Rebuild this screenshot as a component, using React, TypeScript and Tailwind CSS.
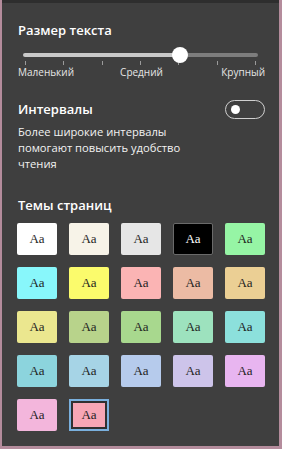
const swatches = [
  { bg: "bg-[#ffffff]" },
  { bg: "bg-[#f7f3e8]" },
  { bg: "bg-[#e6e6e6]" },
  { bg: "bg-[#000000]", dark: true },
  { bg: "bg-[#96f5a5]" },
  { bg: "bg-[#88f7fb]" },
  { bg: "bg-[#fbfb6c]" },
  { bg: "bg-[#fbb4b4]" },
  { bg: "bg-[#ecbba4]" },
  { bg: "bg-[#ebcf94]" },
  { bg: "bg-[#ebe78f]" },
  { bg: "bg-[#b8d38b]" },
  { bg: "bg-[#a8d88e]" },
  { bg: "bg-[#9de2be]" },
  { bg: "bg-[#8ce0dc]" },
  { bg: "bg-[#8cd4dd]" },
  { bg: "bg-[#a6d4e6]" },
  { bg: "bg-[#b6cbec]" },
  { bg: "bg-[#cdc4ea]" },
  { bg: "bg-[#e8b5f0]" },
  { bg: "bg-[#f3b6dc]" },
  { bg: "bg-[#f7a7b6]", selected: true },
];

export default function App() {
  return (
    <div className="w-[282px] h-[449px] bg-[#b48c9c] pl-[2px] pr-[3px] pb-[3px] font-['Open_Sans','Noto_Sans',sans-serif]">
      <div className="h-full bg-[#3f3f3f] border-t-[3px] border-[#2e2e2e] pl-[16px] pr-[14px] pt-[17px] text-white">

        {/* TEXT SIZE */}
        <h2 className="text-[13px] leading-[20px] font-semibold">
          Размер текста
        </h2>

        <div className="relative h-[20px] mt-[5px]">
          <div className="absolute left-[5px] right-[7px] top-[8px] h-[4px] flex rounded-full overflow-hidden">
            <div className="w-[67%] bg-[#c9c9c9]" />
            <div className="flex-1 bg-[#7d7d7d]" />
          </div>
          <div className="absolute left-[7px] right-[9px] top-[16px] h-[4px] flex justify-between">
            {[0, 1, 2, 3, 4, 5, 6].map((i) => (
              <div key={i} className="w-[1px] h-full bg-[#9a9a9a]" />
            ))}
          </div>
          <div className="absolute left-[154px] top-[2px] w-[16px] h-[16px] rounded-full bg-white" />
        </div>

        <div className="grid grid-cols-3 text-[10px] leading-[14px] text-[#e6e6e6]">
          <span className="text-left">Маленький</span>
          <span className="text-center">Средний</span>
          <span className="text-right">Крупный</span>
        </div>

        {/* SPACING */}
        <div className="flex items-center justify-between mt-[20px] h-[20px]">
          <h2 className="text-[13px] leading-[20px] font-semibold">
            Интервалы
          </h2>
          <div className="w-[40px] h-[19px] rounded-full border border-[#cfcfcf] flex items-center pl-[5px]">
            <div className="w-[9px] h-[9px] rounded-full bg-white" />
          </div>
        </div>

        <p className="mt-[5px] text-[11.2px] leading-[16px] text-[#f2f2f2] w-[190px]">
          Более широкие интервалы помогают повысить удобство чтения
        </p>

        {/* PAGE THEMES */}
        <h2 className="mt-[23px] text-[13px] leading-[20px] font-semibold">
          Темы страниц
        </h2>

        <div className="mt-[8px] -ml-[1px] grid grid-cols-[repeat(5,40px)] gap-x-[12px] gap-y-[12px]">
          {swatches.map((s, i) => (
            <div
              key={i}
              className={`w-[40px] h-[32px] rounded-[2px] ${s.bg} ${
                s.dark ? "border border-[#6a6a6a]" : ""
              } ${s.selected ? "border-2 border-[#7ab0de] rounded-none" : ""}`}
            >
              <div
                className={`w-full h-full flex items-center justify-center font-['Liberation_Serif',serif] text-[13px] ${
                  s.dark ? "text-white" : "text-[#1e1e1e]"
                } ${s.selected ? "border-2 border-[#303030]" : ""}`}
              >
                Aa
              </div>
            </div>
          ))}
        </div>

      </div>
    </div>
  );
}
